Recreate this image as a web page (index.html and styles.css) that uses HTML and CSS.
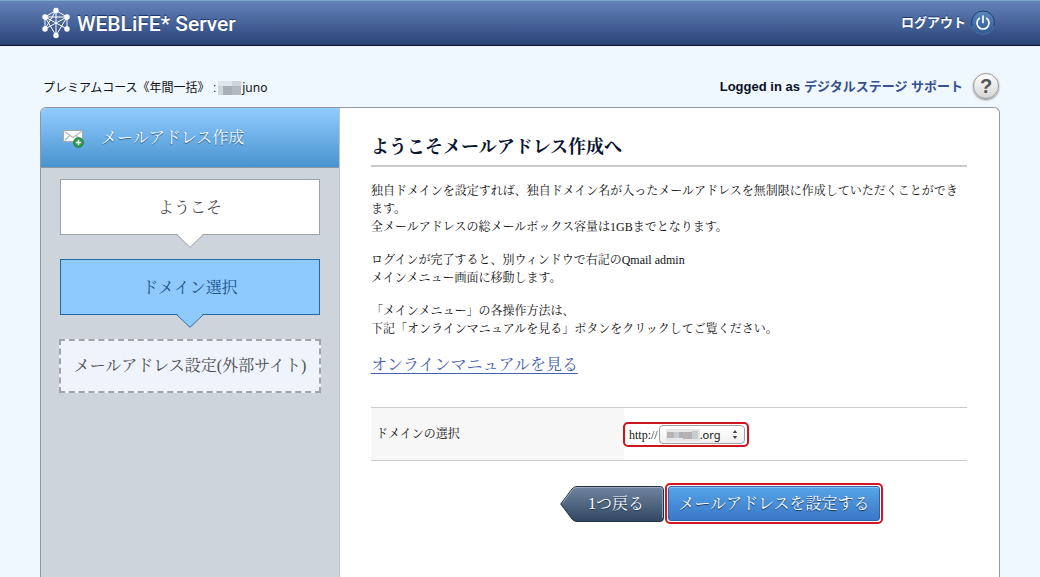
FILE: index.html
```html
<!DOCTYPE html>
<html lang="ja">
<head>
<meta charset="utf-8">
<meta name="viewport" content="width=device-width, initial-scale=1">
<title>WEBLiFE* Server</title>
<link rel="stylesheet" href="styles.css">
</head>
<body>
<header class="topbar">
  <div class="brand">
    <svg class="brand-mark" width="30" height="32" viewBox="0 0 30 32" aria-hidden="true">
      <g fill="none" stroke="#fff" stroke-width="1">
        <path d="M15 3.500 L4 10 V22 M15 3.500 L26 10 V22 M4 10 H26 M15 3.500 V28.500"/>
        <path d="M15 3.500 L4 22 L26 10 L15 28.500 L4 10 L26 22"/>
      </g>
      <g fill="#fff">
        <circle cx="15" cy="3.500" r="2.700"/><circle cx="4" cy="10" r="2.700"/><circle cx="26" cy="10" r="2.700"/>
        <circle cx="4" cy="22" r="2.700"/><circle cx="26" cy="22" r="2.700"/><circle cx="15" cy="28.500" r="2.700"/>
      </g>
    </svg>
    <span class="brand-name">WEBLiFE* Server</span>
  </div>
  <a class="logout" href="#">ログアウト
    <svg width="26" height="26" viewBox="0 0 26 26" aria-hidden="true">
      <defs><linearGradient id="pw" x1="0" y1="0" x2="0" y2="1"><stop offset="0" stop-color="#5b88bd"/><stop offset="1" stop-color="#2f5a97"/></linearGradient></defs>
      <circle cx="13" cy="12.500" r="11.500" fill="url(#pw)" stroke="#1f3f72"/>
      <path d="M2 16 A11.500 11.500 0 0 0 24 16" fill="none" stroke="#6485b8" stroke-width=".8"/>
      <path d="M9.300 8.300 A6 6 0 1 0 16.700 8.300" fill="none" stroke="#fff" stroke-width="1.700" stroke-linecap="round"/>
      <path d="M13 6 V12.500" stroke="#fff" stroke-width="1.700" stroke-linecap="round"/>
    </svg>
  </a>
</header>
<div class="account">
  <div class="course">プレミアムコース《年間一括》 :<svg class="mask" width="24" height="14" viewBox="0 0 24 14" aria-hidden="true">
      <path fill="#dfe5ec" d="M0 0h24v5H0z"/><path fill="#cfd5dc" d="M0 5h5v9H0zM14 0h9v5h-9z"/>
      <path fill="#a9afb8" d="M5 5h9v9H5z"/><path fill="#b3b8c1" d="M14 5h9v9h-9z"/>
    </svg><span class="account-id">juno</span></div>
  <div class="user"><span>Logged in as</span> <a href="#">デジタルステージ サポート</a>
    <button class="help" type="button" aria-label="ヘルプ">?</button>
  </div>
</div>
<div class="panel">
  <aside class="sidebar">
    <div class="side-title">
      <svg width="22" height="20" viewBox="0 0 22 20" aria-hidden="true">
        <rect x=".5" y="1.500" width="19" height="11" fill="#fff" stroke="#a9a9a9"/>
        <path d="M1.500 2.500 L10 8.500 L18.500 2.500 M1.500 11.500 L7 6.500 M18.500 11.500 L13 6.500" fill="none" stroke="#b5b9bd" stroke-width="1.200"/>
        <circle cx="15.500" cy="13.500" r="5" fill="#2c9b49" stroke="#187034" stroke-width=".6"/>
        <path d="M15.500 10.800 V16.200 M12.800 13.500 H18.200" stroke="#fff" stroke-width="1.400"/>
      </svg>
      <span>メールアドレス作成</span>
    </div>
    <ol class="steps">
      <li class="step">ようこそ
        <svg class="tip" width="28" height="14" viewBox="0 0 28 14" aria-hidden="true"><path d="M0 0 H1 L14 13 L27 0 H28" fill="#fff"/><path d="M.5 .5 L14 13.300 L27.500 .5" fill="none" stroke="#9fa3a9"/></svg>
      </li>
      <li class="step current" aria-current="step">ドメイン選択
        <svg class="tip" width="28" height="14" viewBox="0 0 28 14" aria-hidden="true"><path d="M0 0 H1 L14 13 L27 0 H28" fill="#8fcaff"/><path d="M.5 .5 L14 13.300 L27.500 .5" fill="none" stroke="#2269a5"/></svg>
      </li>
      <li class="step pending">メールアドレス設定(外部サイト)</li>
    </ol>
  </aside>
  <main class="content">
    <h1>ようこそメールアドレス作成へ</h1>
    <p>独自ドメインを設定すれば、独自ドメイン名が入ったメールアドレスを無制限に作成していただくことができます。<br>全メールアドレスの総メールボックス容量は1GBまでとなります。</p>
    <p>ログインが完了すると、別ウィンドウで右記のQmail admin<br>メインメニュー画面に移動します。</p>
    <p>「メインメニュー」の各操作方法は、<br>下記「オンラインマニュアルを見る」ボタンをクリックしてご覧ください。</p>
    <a class="manual" href="#">オンラインマニュアルを見る</a>
    <form>
      <div class="field">
        <label for="domain">ドメインの選択</label>
        <div class="value">
          <div class="marked">
            <span>http://</span>
            <div class="picker">
              <select id="domain"><option>.org</option></select>
              <svg class="blur" width="34" height="12" viewBox="0 0 34 12" aria-hidden="true">
                <path fill="#e6e6e6" d="M0 0h34v12H0z"/><path fill="#b9b3b3" d="M1 3h7v6H1zM17 3h5v7h-5z"/>
                <path fill="#c6cbcf" d="M8 3h5v6H8zM26 2h6v8h-6z"/><path fill="#b0b1b7" d="M13 3h4v6h-4zM22 3h4v7h-4z"/>
              </svg>
              <svg class="arrows" width="6" height="9" viewBox="0 0 6 9" aria-hidden="true"><path d="M3 0 L5.200 3 H.8 Z M3 9 L5.200 6 H.8 Z" fill="#444"/></svg>
            </div>
          </div>
        </div>
      </div>
      <div class="actions">
        <button class="back" type="button">
          <svg viewBox="0 0 104 36" width="104" height="36" aria-hidden="true">
            <defs><linearGradient id="bk" x1="0" y1="0" x2="0" y2="1"><stop offset="0" stop-color="#7185a0"/><stop offset="1" stop-color="#314761"/></linearGradient></defs>
            <path d="M.7 18 L12 3 Q14 .5 17 .5 H100 Q103.500 .5 103.500 4 V32 Q103.500 35.500 100 35.500 H17 Q14 35.500 12 33 Z" fill="url(#bk)" stroke="#26313f"/>
            <path d="M2.500 17 L13 3 Q14.500 1.500 17 1.500 H100 Q102.500 1.500 102.500 4 V32" fill="none" stroke="#a3b0c0" stroke-width=".8"/>
          </svg>
          <span>1つ戻る</span>
        </button>
        <div class="submit-frame"><button class="submit" type="submit">メールアドレスを設定する</button></div>
      </div>
    </form>
  </main>
</div>
</body>
</html>
```

FILE: styles.css
```css
:root {
  --sans: "Liberation Sans", "Noto Sans CJK JP", sans-serif;
  --serif: "Liberation Serif", "Noto Serif CJK JP", "Noto Sans CJK JP", serif;
}
* { box-sizing: border-box; }
body {
  margin: 0;
  min-height: 100vh;
  display: flex;
  flex-direction: column;
  background: #eff7ff;
  color: #111;
  font: 12px/18px var(--sans);
}
svg { display: block; flex: none; }

.topbar {
  display: flex;
  align-items: center;
  justify-content: space-between;
  height: 46px;
  padding: 0 44px 0 41px;
  border-top: 1px solid #7ba6cd;
  border-bottom: 1px solid #0c1428;
  background: linear-gradient(#6583b9, #294479);
}
.brand { display: flex; align-items: center; gap: 6px; }
.brand-mark { margin-top: -1px; }
.brand-name {
  padding-top: 2px;
  color: #fff;
  font: 500 21px/28px Roboto, sans-serif;
  text-shadow: 0 -1px 1px #1c3566;
}
.logout {
  display: flex;
  align-items: center;
  gap: 4px;
  color: #fff;
  font-size: 13px;
  font-weight: 700;
  text-decoration: none;
  text-shadow: 0 -1px 1px #1c3566;
}

.account {
  display: flex;
  align-items: center;
  justify-content: space-between;
  height: 61px;
  padding: 20px 41px 2px 43px;
}
.course { display: flex; align-items: center; padding-top: 4px; white-space: pre; }
.mask { margin-left: 2px; }
.account-id { font-family: "Noto Sans", sans-serif; }
.user {
  display: flex;
  align-items: center;
  gap: 4px;
  color: #0b1022;
  font-size: 13px;
  font-weight: 700;
}
.user span, .user a { padding-top: 3px; }
.user a { color: #35508c; text-decoration: none; }
.help {
  width: 26px;
  height: 26px;
  margin-left: 6px;
  padding: 0;
  border: 1px solid #9a9a9a;
  border-radius: 50%;
  background: linear-gradient(#fff, #d5d5d5);
  box-shadow: 0 1px 2px #888;
  color: #555;
  font: 700 20px/24px var(--sans);
}

.panel {
  flex: 1;
  display: flex;
  margin: 0 40px;
  border: 1px solid #9097a1;
  border-bottom: 0;
  border-radius: 6px 6px 0 0;
  background: #fff;
  overflow: hidden;
}
.sidebar {
  flex: 0 0 299px;
  border-right: 1px solid #c2c6cc;
  background: #ced4dc;
  font: 16px/24px var(--serif);
}
.side-title {
  display: flex;
  align-items: center;
  gap: 16px;
  height: 60px;
  padding-left: 22px;
  border-bottom: 1px solid #8c98a5;
  background: linear-gradient(#92ccff, #4893cf);
  color: #fff;
  text-shadow: 0 1px 1px #245680;
}
.side-title svg { margin-top: 2px; }
.steps {
  display: flex;
  flex-direction: column;
  gap: 24px;
  margin: 0;
  padding: 11px 19px;
  list-style: none;
}
.step {
  position: relative;
  display: flex;
  align-items: center;
  justify-content: center;
  height: 56px;
  padding-top: 2px;
  border: 1px solid #9fa3a9;
  background: #fff;
  color: #4d4d4d;
}
.step.current { border-color: #2269a5; background: #8fcaff; color: #1c5288; }
.step.pending {
  height: 54px;
  margin: 0 -1px;
  padding: 0;
  border: 2px dashed #a2a4a7;
  background: #eef3fc;
  white-space: nowrap;
}
.tip { position: absolute; top: 100%; left: 50%; margin-left: -14px; }

.content {
  flex: 1;
  min-width: 0;
  padding: 26px 32px 24px 31px;
  font-family: var(--serif);
}
h1 {
  margin: 0 0 15px;
  padding-bottom: 4px;
  border-bottom: 2px solid #c9c9c9;
  color: #0a1532;
  font-size: 18px;
  line-height: 27px;
}
.content p { margin: 0 0 15px; }
.manual { color: #4560ad; font-size: 16px; line-height: 24px; text-underline-offset: 3px; }

.field {
  display: grid;
  grid-template-columns: 253px 1fr;
  margin-top: 30px;
  border: solid #cbcbcb;
  border-width: 1px 0;
}
.field label { display: flex; align-items: center; padding-left: 5px; background: #f7f7f7; }
.value { display: flex; padding: 14px 0 13px; }
.marked {
  display: flex;
  align-items: center;
  gap: 1px;
  margin-left: -1px;
  padding: 1px 2px 1px 4px;
  border: 2px solid #cf1420;
  border-radius: 5px;
}
.picker { position: relative; }
.picker select {
  display: block;
  width: 86px;
  height: 19px;
  padding: 0 0 0 40px;
  appearance: none;
  border: 1px solid #a0a0a0;
  border-radius: 4px;
  background: linear-gradient(#fff, #f0f0f0);
  color: #111;
  font: 11px/17px "Noto Sans", sans-serif;
}
.blur, .arrows { position: absolute; pointer-events: none; }
.blur { top: 4px; left: 7px; }
.arrows { top: 5px; right: 7px; }

.actions { display: flex; justify-content: center; gap: 1px; margin-top: 22px; padding-left: 105px; }
.actions button { border: 0; color: #fff; font: 16px/24px var(--serif); white-space: nowrap; text-shadow: 0 1px 1px #173457; }
.back { display: grid; place-items: center; align-self: center; padding: 0; background: none; }
.back > * { grid-area: 1 / 1; }
.back span { padding-left: 7px; }
.submit-frame { padding: 1px; border: 2px solid #d41420; border-radius: 5px; }
.actions .submit {
  display: block;
  height: 35px;
  padding: 0 9px;
  border: 1px solid #2c66a8;
  border-radius: 3px;
  background: linear-gradient(#57a5e8, #3977c6);
  box-shadow: inset 0 1px #8ac3f2;
}
```
